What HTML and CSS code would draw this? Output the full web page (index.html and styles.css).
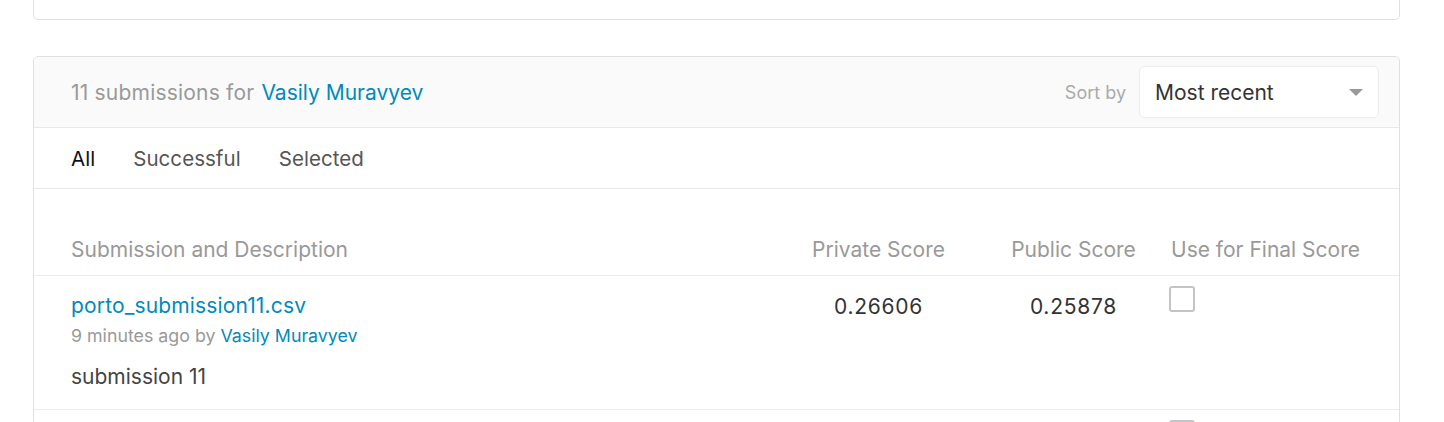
FILE: index.html
```html
<!DOCTYPE html>
<html>
<head>
<meta charset="utf-8">
<link rel="stylesheet" href="styles.css">
</head>
<body>
<div class="page">
  <div class="card card-top"></div>
  <div class="card subs">
    <div class="subs-head">
      <div class="subs-title">11 submissions for <a class="link">Vasily Muravyev</a></div>
      <div class="sort">
        <span class="sort-label">Sort by</span>
        <div class="select">
          <span>Most recent</span>
          <svg class="caret" width="14" height="8" viewBox="0 0 14 8"><path d="M0 0H14L7 7Z" fill="#999"/></svg>
        </div>
      </div>
    </div>
    <div class="tabs">
      <span class="tab active">All</span>
      <span class="tab">Successful</span>
      <span class="tab">Selected</span>
    </div>
    <div class="grid thead">
      <div class="th">Submission and Description</div>
      <div class="th center">Private Score</div>
      <div class="th center">Public Score</div>
      <div class="th">Use for Final Score</div>
    </div>
    <div class="grid row">
      <div class="desc">
        <a class="link file">porto_submission11.csv</a>
        <div class="meta">9 minutes ago by <a class="link">Vasily Muravyev</a></div>
        <div class="note">submission 11</div>
      </div>
      <div class="score">0.26606</div>
      <div class="score">0.25878</div>
      <div><span class="check"></span></div>
    </div>
    <div class="grid row">
      <div class="desc"></div>
      <div class="score"></div>
      <div class="score"></div>
      <div><span class="check"></span></div>
    </div>
  </div>
</div>
</body>
</html>
```
FILE: styles.css
```css
* { box-sizing: border-box; }
html, body { margin: 0; padding: 0; background: #fff; }
body {
  font-family: Inter, "Noto Sans", sans-serif;
  color: #333;
  overflow: hidden;
  height: 422px;
}
.page {
  padding: 0 44px 0 33px;
}
.card {
  border: 1px solid #e0e0e0;
  border-radius: 5px;
  background: #fff;
}
.card-top {
  height: 20px;
  border-top: none;
  border-radius: 0 0 5px 5px;
}
.subs {
  margin-top: 36px;
  overflow: hidden;
}
.link { color: #008abc; text-decoration: none; }
.subs-head {
  background: #fafafa;
  height: 71px;
  border-bottom: 1px solid #e8e8e8;
  display: flex;
  align-items: center;
  justify-content: space-between;
  padding: 0 20px 0 37px;
}
.subs-title {
  font-size: 21px;
  letter-spacing: 0.2px;
  color: #999;
}
.subs-title .link { margin-left: 1px; letter-spacing: 0; }
.sort { display: flex; align-items: center; gap: 13px; }
.sort-label { font-size: 18px; color: #aaa; }
.select {
  width: 240px;
  height: 52px;
  background: #fff;
  border: 1px solid #ececec;
  border-radius: 5px;
  display: flex;
  align-items: center;
  justify-content: space-between;
  padding: 0 15px 0 15px;
  font-size: 21px;
  color: #333;
}
.caret { margin-top: 1px; }
.tabs {
  height: 61px;
  border-bottom: 1px solid #e8e8e8;
  display: flex;
  align-items: center;
  gap: 38px;
  padding: 0 37px;
  font-size: 20.5px;
  letter-spacing: 0.05px;
  color: #555;
}
.tab.active { color: #111; }
.grid {
  display: grid;
  grid-template-columns: 1fr 195px 195px 228px;
  padding-left: 37px;
}
.thead {
  height: 87px;
  border-bottom: 1px solid #ececec;
  align-items: end;
  padding-bottom: 13px;
  font-size: 21px;
  line-height: 24px;
  color: #999;
}
.center { text-align: center; }
.row {
  height: 134px;
  border-bottom: 1px solid #ececec;
  padding-top: 16px;
}
.file { font-size: 21px; letter-spacing: 0.15px; display: block; line-height: 26px; margin-top: 1px; }
.meta { font-size: 17.8px; color: #999; margin-top: 6px; line-height: 22px; }
.note { font-size: 21px; color: #444; margin-top: 18px; line-height: 24px; }
.score { text-align: center; font-size: 21px; letter-spacing: 0.75px; color: #333; line-height: 26px; padding-top: 2px; }
.check {
  display: block;
  width: 26px;
  height: 26px;
  border: 2px solid #c4c4c8;
  border-radius: 3px;
  margin-top: -6px;
  margin-left: -2px;
}
```
